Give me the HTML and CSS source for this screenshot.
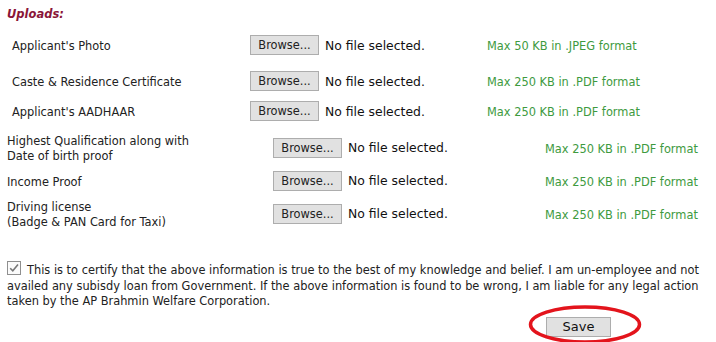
FILE: index.html
```html
<!DOCTYPE html>
<html>
<head>
<meta charset="utf-8">
<link rel="stylesheet" href="styles.css">
</head>
<body>
<div class="page">
  <h2 class="title">Uploads:</h2>

  <div class="group g1">
    <div class="row first">
      <span class="label">Applicant's Photo</span>
      <span class="file"><button class="browse">Browse...</button><span class="none">No file selected.</span></span>
      <span class="hint">Max 50 KB in .JPEG format</span>
    </div>
    <div class="row">
      <span class="label">Caste &amp; Residence Certificate</span>
      <span class="file"><button class="browse">Browse...</button><span class="none">No file selected.</span></span>
      <span class="hint">Max 250 KB in .PDF format</span>
    </div>
    <div class="row">
      <span class="label">Applicant's AADHAAR</span>
      <span class="file"><button class="browse">Browse...</button><span class="none">No file selected.</span></span>
      <span class="hint">Max 250 KB in .PDF format</span>
    </div>
  </div>

  <div class="group g2">
    <div class="row">
      <span class="label">Highest Qualification along with<br>Date of birth proof</span>
      <span class="file"><button class="browse">Browse...</button><span class="none">No file selected.</span></span>
      <span class="hint">Max 250 KB in .PDF format</span>
    </div>
    <div class="row">
      <span class="label">Income Proof</span>
      <span class="file"><button class="browse">Browse...</button><span class="none">No file selected.</span></span>
      <span class="hint">Max 250 KB in .PDF format</span>
    </div>
    <div class="row">
      <span class="label">Driving license<br>(Badge &amp; PAN Card for Taxi)</span>
      <span class="file"><button class="browse">Browse...</button><span class="none">No file selected.</span></span>
      <span class="hint">Max 250 KB in .PDF format</span>
    </div>
  </div>

  <p class="certify"><span class="check"><svg width="12" height="12" viewBox="0 0 12 12"><path d="M2.2 6.2 L4.8 8.8 L10 2.6" fill="none" stroke="#777" stroke-width="1.6"/></svg></span>This is to certify that the above information is true to the best of my knowledge and belief. I am un-employee and not availed any subisdy loan from Government. If the above information is found to be wrong, I am liable for any legal action taken by the AP Brahmin Welfare Corporation.</p>

  <div class="actions">
    <div class="save-wrap">
      <button class="save">Save</button>
      <svg class="circle" width="114" height="40" viewBox="0 0 114 40"><ellipse cx="57" cy="19.5" rx="54.5" ry="17.5" fill="none" stroke="#e3141c" stroke-width="3.5"/></svg>
    </div>
  </div>
</div>
</body>
</html>
```

FILE: styles.css
```css
html, body {
  margin: 0;
  padding: 0;
  background: #ffffff;
}
body {
  font-family: "DejaVu Sans", Verdana, sans-serif;
  font-size: 11.4px;
  color: #222222;
}
.page {
  width: 716px;
  height: 342px;
  overflow: hidden;
}
.title {
  margin: 7px 0 0 7px;
  font-size: 11.5px;
  line-height: 14px;
  font-weight: bold;
  font-style: italic;
  color: #8a1538;
}
.group {
  display: flex;
  flex-direction: column;
}
.g1 {
  margin-top: 9px;
}
.g1 .row {
  display: grid;
  grid-template-columns: 238px 237px auto;
  align-items: center;
  height: 30px;
  padding-left: 12px;
}
.g1 .row.first {
  margin-bottom: 6px;
}
.g2 .row {
  display: grid;
  grid-template-columns: 266px 272px auto;
  align-items: center;
  height: 33px;
  padding-left: 7px;
}
.g2 {
  margin-top: 5px;
}
.label {
  line-height: 15px;
  padding-top: 2px;
}
.g2 .label {
  padding-top: 3px;
}
.file {
  display: flex;
  align-items: center;
}
.browse {
  box-sizing: border-box;
  width: 69px;
  height: 20px;
  padding: 0;
  margin: 0 6px 0 0;
  border: 1px solid #adadad;
  background: #e1e1e1;
  font-family: "DejaVu Sans", Verdana, sans-serif;
  font-size: 11.4px;
  color: #222222;
}
.none {
  font-size: 12.4px;
  color: #111111;
}
.hint {
  color: #3e9a3e;
  padding-top: 2px;
}
.certify {
  margin: 31px 6px 0 7px;
  line-height: 15.5px;
}
.check {
  display: inline-block;
  box-sizing: border-box;
  width: 14px;
  height: 14px;
  border: 1px solid #8f8f8f;
  background: #fbfbfb;
  margin-right: 6px;
  vertical-align: -1px;
  position: relative;
}
.check svg {
  display: block;
  margin: 0;
}
.actions {
  margin-top: 7px;
  padding-left: 546px;
}
.save-wrap {
  position: relative;
  width: 65px;
  height: 20px;
}
.save {
  box-sizing: border-box;
  width: 65px;
  height: 20px;
  padding: 0;
  border: 1px solid #adadad;
  background: #e1e1e1;
  font-family: "DejaVu Sans", Verdana, sans-serif;
  font-size: 13px;
  color: #111111;
}
.circle {
  position: absolute;
  left: -18px;
  top: -12px;
  pointer-events: none;
}
```
